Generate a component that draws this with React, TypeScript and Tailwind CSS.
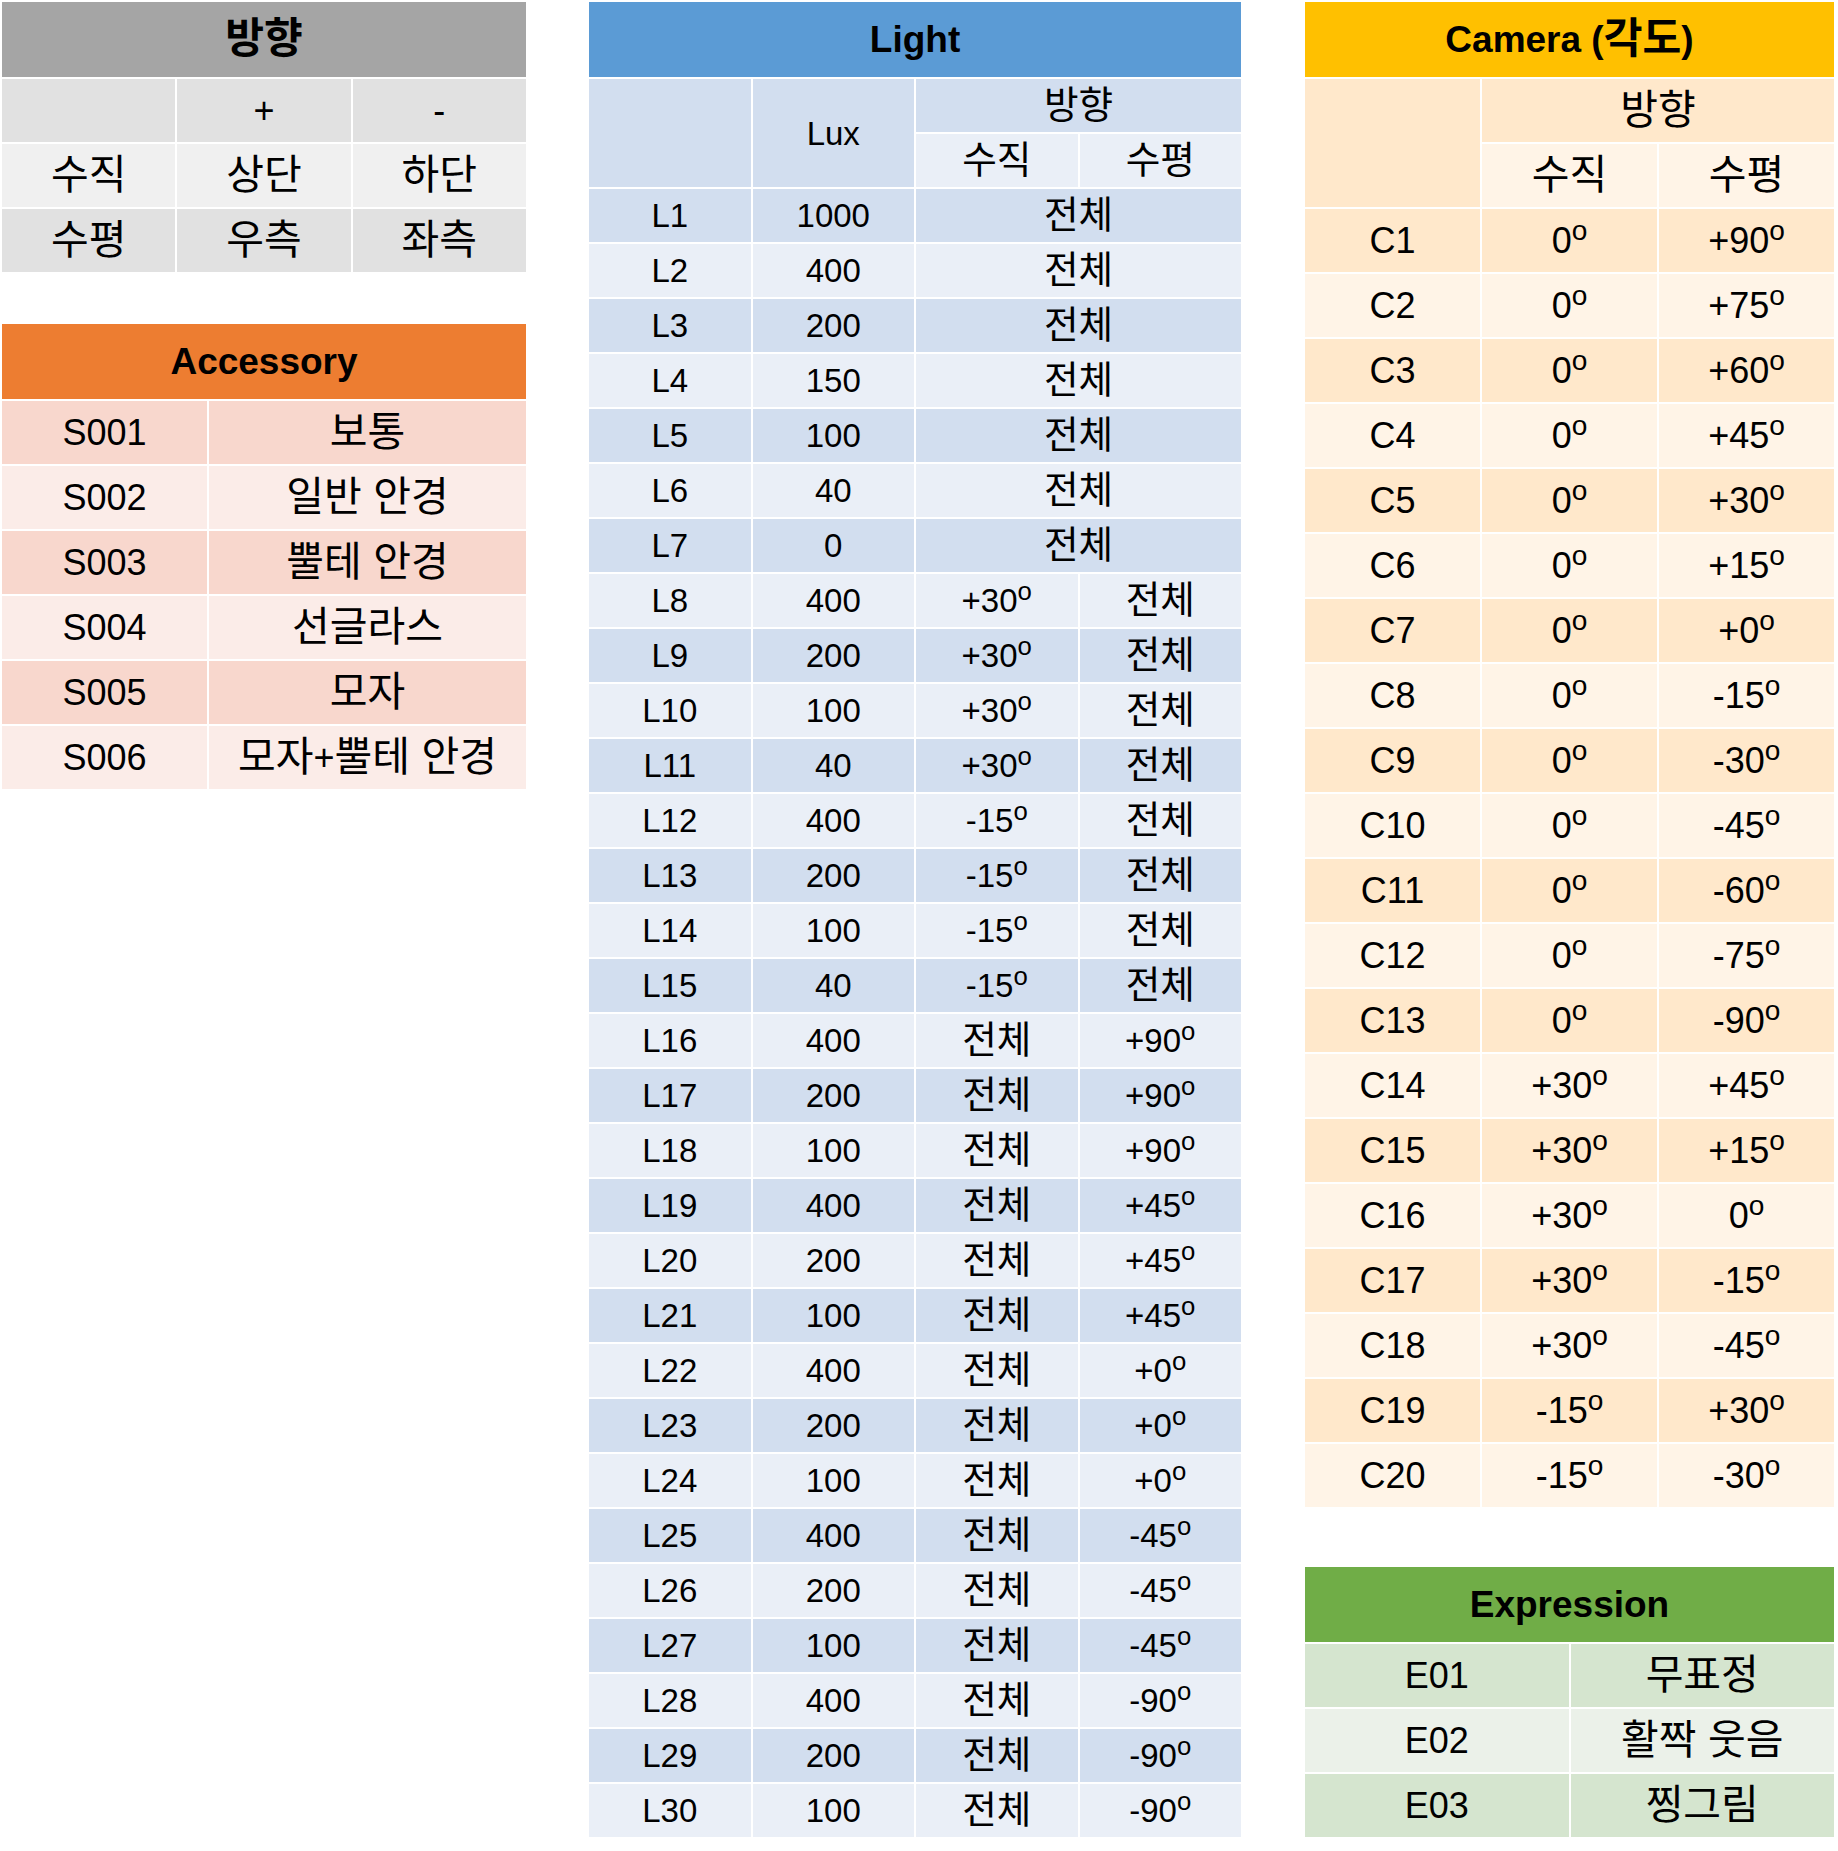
import type { ReactNode } from 'react'

const FONT = "font-['Liberation_Sans','Noto_Sans_CJK_KR',sans-serif]"

// Noto's hangul sits small next to Arial; bump hangul runs so they match the slide font
function T({ s }: { s: string }) {
  const parts = s.split(/([\uac00-\ud7a3]+(?: [\uac00-\ud7a3]+)*)/)
  return (
    <>
      {parts.map((p, i) =>
        /[\uac00-\ud7a3]/.test(p) ? (
          <span key={i} className="whitespace-pre text-[1.14em] leading-none">
            {p}
          </span>
        ) : (
          <span key={i} className="whitespace-pre">{p}</span>
        ),
      )}
    </>
  )
}

// values ending with ° get a raised "o" like the slide
function Val({ v }: { v: string }) {
  if (v.endsWith('°')) {
    return (
      <span>
        {v.slice(0, -1)}
        <span className="align-super text-[0.78em] leading-[0]">o</span>
      </span>
    )
  }
  return <T s={v} />
}

function Cell({ bg, children, className = '' }: { bg: string; children?: ReactNode; className?: string }) {
  return <div className={`${bg} flex items-center justify-center leading-none ${className}`}>{children}</div>
}

const lightRows: [string, string, string, string | null][] = [
  ['L1', '1000', '전체', null],
  ['L2', '400', '전체', null],
  ['L3', '200', '전체', null],
  ['L4', '150', '전체', null],
  ['L5', '100', '전체', null],
  ['L6', '40', '전체', null],
  ['L7', '0', '전체', null],
  ['L8', '400', '+30°', '전체'],
  ['L9', '200', '+30°', '전체'],
  ['L10', '100', '+30°', '전체'],
  ['L11', '40', '+30°', '전체'],
  ['L12', '400', '-15°', '전체'],
  ['L13', '200', '-15°', '전체'],
  ['L14', '100', '-15°', '전체'],
  ['L15', '40', '-15°', '전체'],
  ['L16', '400', '전체', '+90°'],
  ['L17', '200', '전체', '+90°'],
  ['L18', '100', '전체', '+90°'],
  ['L19', '400', '전체', '+45°'],
  ['L20', '200', '전체', '+45°'],
  ['L21', '100', '전체', '+45°'],
  ['L22', '400', '전체', '+0°'],
  ['L23', '200', '전체', '+0°'],
  ['L24', '100', '전체', '+0°'],
  ['L25', '400', '전체', '-45°'],
  ['L26', '200', '전체', '-45°'],
  ['L27', '100', '전체', '-45°'],
  ['L28', '400', '전체', '-90°'],
  ['L29', '200', '전체', '-90°'],
  ['L30', '100', '전체', '-90°'],
]

const cameraRows: [string, string, string][] = [
  ['C1', '0°', '+90°'],
  ['C2', '0°', '+75°'],
  ['C3', '0°', '+60°'],
  ['C4', '0°', '+45°'],
  ['C5', '0°', '+30°'],
  ['C6', '0°', '+15°'],
  ['C7', '0°', '+0°'],
  ['C8', '0°', '-15°'],
  ['C9', '0°', '-30°'],
  ['C10', '0°', '-45°'],
  ['C11', '0°', '-60°'],
  ['C12', '0°', '-75°'],
  ['C13', '0°', '-90°'],
  ['C14', '+30°', '+45°'],
  ['C15', '+30°', '+15°'],
  ['C16', '+30°', '0°'],
  ['C17', '+30°', '-15°'],
  ['C18', '+30°', '-45°'],
  ['C19', '-15°', '+30°'],
  ['C20', '-15°', '-30°'],
]

const accessories = [
  ['S001', '보통'],
  ['S002', '일반 안경'],
  ['S003', '뿔테 안경'],
  ['S004', '선글라스'],
  ['S005', '모자'],
  ['S006', '모자+뿔테 안경'],
]

const expressions = [
  ['E01', '무표정'],
  ['E02', '활짝 웃음'],
  ['E03', '찡그림'],
]

export default function App() {
  return (
    <div className={`min-h-[1851px] w-[1838px] bg-white pl-[2px] pt-[2px] text-black ${FONT}`}>
      <div className="flex items-start">
        {/* left column */}
        <div className="flex w-[524px] flex-col">
          <div className="grid grid-cols-3 grid-rows-[75px] auto-rows-[63px] gap-[2px] text-[36px]">
            <Cell bg="bg-[#a5a5a5]" className="col-span-3 text-[37px] font-bold"><T s="방향" /></Cell>
            <Cell bg="bg-[#e1e1e1]" />
            <Cell bg="bg-[#e1e1e1]">+</Cell>
            <Cell bg="bg-[#e1e1e1]">-</Cell>
            <Cell bg="bg-[#f0f0f0]"><T s="수직" /></Cell>
            <Cell bg="bg-[#f0f0f0]"><T s="상단" /></Cell>
            <Cell bg="bg-[#f0f0f0]"><T s="하단" /></Cell>
            <Cell bg="bg-[#e1e1e1]"><T s="수평" /></Cell>
            <Cell bg="bg-[#e1e1e1]"><T s="우측" /></Cell>
            <Cell bg="bg-[#e1e1e1]"><T s="좌측" /></Cell>
          </div>

          <div className="mt-[52px] grid grid-cols-[205px_1fr] grid-rows-[75px] auto-rows-[63px] gap-[2px] text-[36px]">
            <Cell bg="bg-[#ed7d31]" className="col-span-2 text-[37px] font-bold">Accessory</Cell>
            {accessories.map(([code, name], i) => {
              const bg = i % 2 === 0 ? 'bg-[#f8d7cd]' : 'bg-[#fbece8]'
              return [
                <Cell key={code} bg={bg}>{code}</Cell>,
                <Cell key={code + 'n'} bg={bg}><T s={name} /></Cell>,
              ]
            })}
          </div>
        </div>

        {/* light */}
        <div className="ml-[63px] grid w-[652px] grid-cols-4 grid-rows-[75px_53px_53px] auto-rows-[53px] gap-[2px] text-[33px]">
          <Cell bg="bg-[#5b9bd5]" className="col-span-4 text-[37px] font-bold">Light</Cell>
          <Cell bg="bg-[#d2deef]" className="row-span-2" />
          <Cell bg="bg-[#d2deef]" className="row-span-2">Lux</Cell>
          <Cell bg="bg-[#d2deef]" className="col-span-2"><T s="방향" /></Cell>
          <Cell bg="bg-[#eaeff7]"><T s="수직" /></Cell>
          <Cell bg="bg-[#eaeff7]"><T s="수평" /></Cell>
          {lightRows.map(([id, lux, v, h], i) => {
            const bg = i % 2 === 0 ? 'bg-[#d2deef]' : 'bg-[#eaeff7]'
            return [
              <Cell key={id} bg={bg}>{id}</Cell>,
              <Cell key={id + 'l'} bg={bg}>{lux}</Cell>,
              <Cell key={id + 'v'} bg={bg} className={h === null ? 'col-span-2' : ''}>
                <Val v={v} />
              </Cell>,
              h !== null ? (
                <Cell key={id + 'h'} bg={bg}>
                  <Val v={h} />
                </Cell>
              ) : null,
            ]
          })}
        </div>

        {/* right column */}
        <div className="ml-[64px] flex w-[529px] flex-col">
          <div className="grid grid-cols-3 grid-rows-[75px] auto-rows-[63px] gap-[2px] text-[36px]">
            <Cell bg="bg-[#ffc000]" className="col-span-3 text-[37px] font-bold"><T s="Camera (각도)" /></Cell>
            <Cell bg="bg-[#ffe8cb]" className="row-span-2" />
            <Cell bg="bg-[#ffe8cb]" className="col-span-2"><T s="방향" /></Cell>
            <Cell bg="bg-[#fff4e7]"><T s="수직" /></Cell>
            <Cell bg="bg-[#fff4e7]"><T s="수평" /></Cell>
            {cameraRows.map(([id, v, h], i) => {
              const bg = i % 2 === 0 ? 'bg-[#ffe8cb]' : 'bg-[#fff4e7]'
              return [
                <Cell key={id} bg={bg}>{id}</Cell>,
                <Cell key={id + 'v'} bg={bg}><Val v={v} /></Cell>,
                <Cell key={id + 'h'} bg={bg}><Val v={h} /></Cell>,
              ]
            })}
          </div>

          <div className="mt-[60px] grid grid-cols-2 grid-rows-[75px] auto-rows-[63px] gap-[2px] text-[36px]">
            <Cell bg="bg-[#70ad47]" className="col-span-2 text-[37px] font-bold">Expression</Cell>
            {expressions.map(([code, name], i) => {
              const bg = i % 2 === 0 ? 'bg-[#d5e5cf]' : 'bg-[#ebf1e9]'
              return [
                <Cell key={code} bg={bg}>{code}</Cell>,
                <Cell key={code + 'n'} bg={bg}><T s={name} /></Cell>,
              ]
            })}
          </div>
        </div>
      </div>
    </div>
  )
}
